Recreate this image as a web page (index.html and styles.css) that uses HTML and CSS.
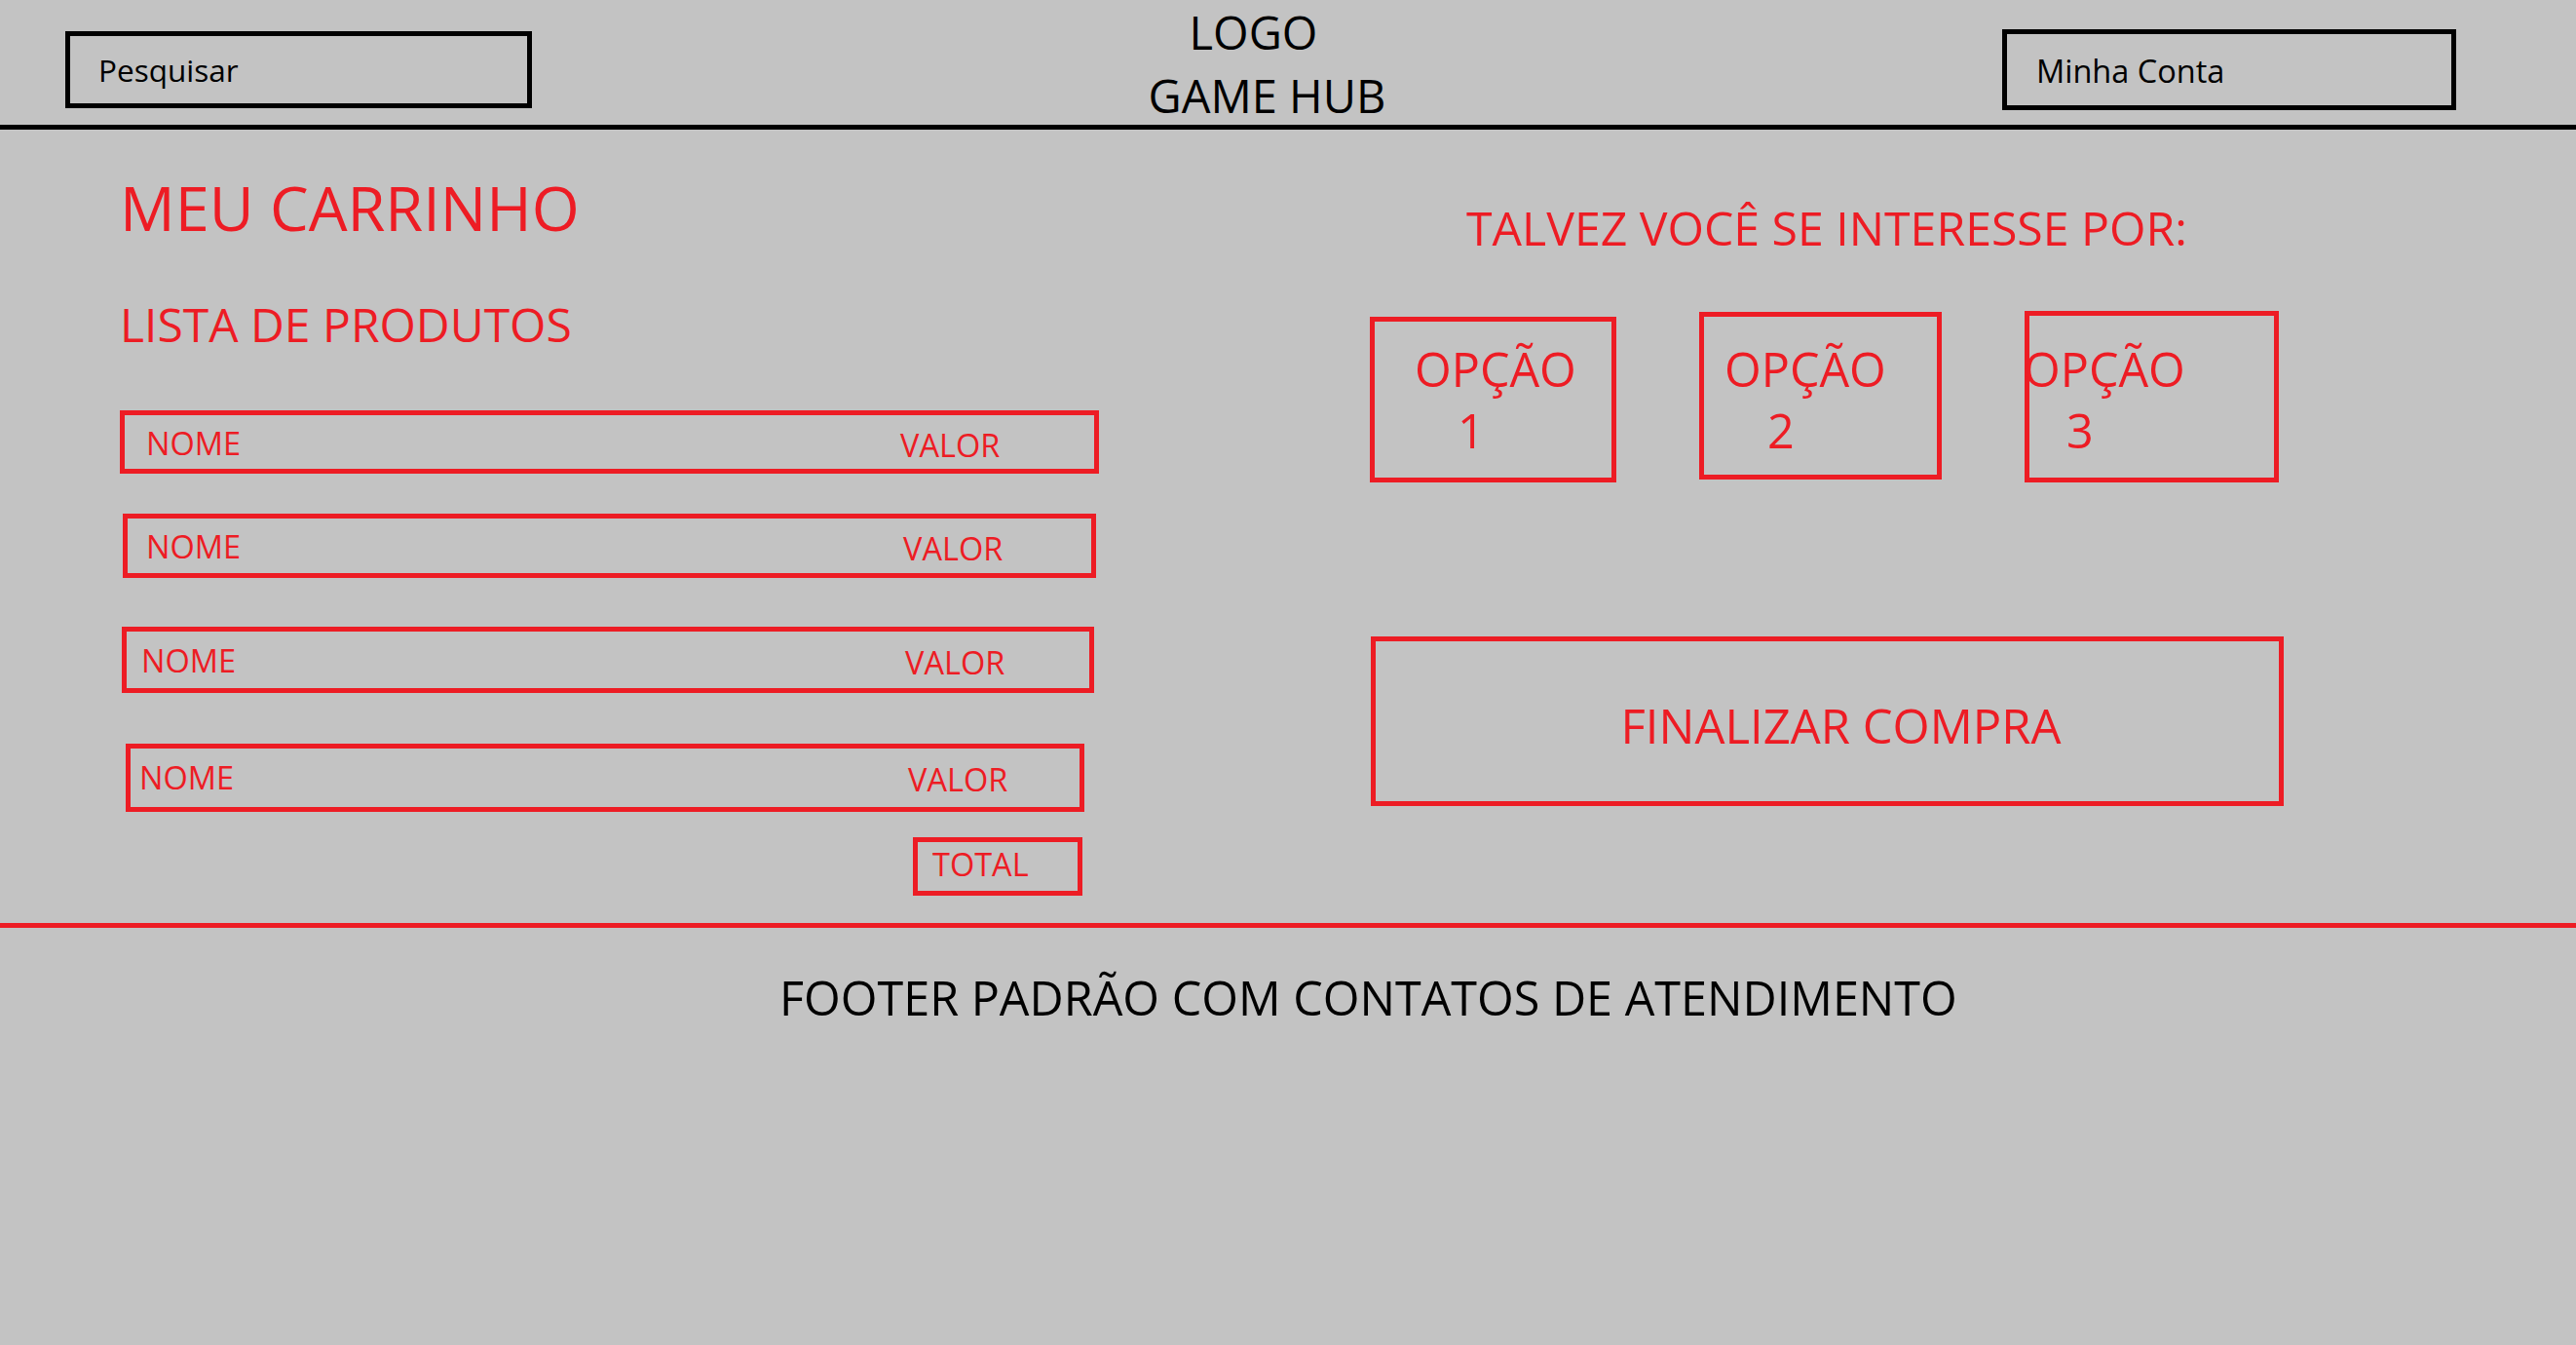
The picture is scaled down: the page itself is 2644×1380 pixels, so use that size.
FILE: index.html
```html
<!DOCTYPE html>
<html lang="pt-BR">
<head>
<meta charset="utf-8">
<title>Meu Carrinho - Game Hub</title>
<link rel="stylesheet" href="styles.css">
</head>
<body>
<header class="topbar">
  <div class="search-box">Pesquisar</div>
  <div class="logo">
    <div class="logo-line logo-top">LOGO</div>
    <div class="logo-line">GAME HUB</div>
  </div>
  <div class="account-box">Minha Conta</div>
</header>
<main class="content">
  <section class="cart">
    <h1 class="cart-title">MEU CARRINHO</h1>
    <h2 class="cart-subtitle">LISTA DE PRODUTOS</h2>
    <div class="cart-list">
      <div class="cart-row"><span class="item-name">NOME</span><span class="item-value">VALOR</span></div>
      <div class="cart-row"><span class="item-name">NOME</span><span class="item-value">VALOR</span></div>
      <div class="cart-row"><span class="item-name">NOME</span><span class="item-value">VALOR</span></div>
      <div class="cart-row"><span class="item-name">NOME</span><span class="item-value">VALOR</span></div>
      <div class="cart-total">TOTAL</div>
    </div>
  </section>
  <section class="suggest">
    <h2 class="suggest-title">TALVEZ VOCÊ SE INTERESSE POR:</h2>
    <div class="options">
      <div class="option"><div class="opt-text"><div class="opt-label">OPÇÃO</div><div class="opt-num">1</div></div></div>
      <div class="option"><div class="opt-text"><div class="opt-label">OPÇÃO</div><div class="opt-num">2</div></div></div>
      <div class="option"><div class="opt-text"><div class="opt-label">OPÇÃO</div><div class="opt-num">3</div></div></div>
    </div>
    <div class="checkout">FINALIZAR COMPRA</div>
  </section>
</main>
<footer class="footer">
  <p class="footer-text">FOOTER PADRÃO COM CONTATOS DE ATENDIMENTO</p>
</footer>
</body>
</html>
```
FILE: styles.css
```css
html {
  background: #c3c3c3;
}
body {
  margin: 0;
  min-height: 1380px;
  background: #c3c3c3;
  font-family: "Open Sans", "Noto Sans", sans-serif;
  color: #000;
}
* {
  box-sizing: border-box;
}
h1, h2, p {
  margin: 0;
  font-weight: normal;
}

/* Header */
.topbar {
  height: 133px;
  border-bottom: 5px solid #000;
  display: flex;
  justify-content: space-between;
  align-items: flex-start;
  padding: 0 123px 0 67px;
}
.search-box {
  margin-top: 32px;
  width: 479px;
  height: 79px;
  border: 5px solid #000;
  display: flex;
  align-items: center;
  padding-left: 29px;
  font-size: 31.5px;
  line-height: 1;
}
.account-box {
  margin-top: 30px;
  width: 466px;
  height: 83px;
  border: 5px solid #000;
  display: flex;
  align-items: center;
  padding-left: 30px;
  padding-top: 3px;
  font-size: 32.5px;
  line-height: 1;
}
.logo {
  text-align: center;
  font-size: 47px;
  line-height: 65px;
  padding-top: 1px;
}
.logo-top {
  padding-right: 28px;
}

/* Main */
.content {
  height: 814px;
  display: grid;
  grid-template-columns: 1406px 1fr;
}
.cart {
  padding-left: 123px;
  color: #ed1c24;
}
.cart-title {
  margin-top: 48px;
  font-size: 63px;
  line-height: 1;
}
.cart-subtitle {
  margin-top: 65px;
  font-size: 48px;
  line-height: 1;
}
.cart-list {
  display: flex;
  flex-direction: column;
  align-items: flex-start;
}
.cart-row {
  border: 5px solid #ed1c24;
  display: flex;
  align-items: center;
  padding-top: 3px;
  font-size: 32.5px;
  line-height: 1;
}
.item-name {
  width: 796px;
}
.item-value {
  margin-top: 4px;
}
.cart-row:nth-child(1) {
  margin-top: 64px;
  width: 1005px;
  height: 65px;
}
.cart-row:nth-child(1) .item-name { padding-left: 22px; }
.cart-row:nth-child(2) {
  margin-top: 41px;
  margin-left: 3px;
  width: 999px;
  height: 66px;
}
.cart-row:nth-child(2) .item-name { padding-left: 19px; }
.cart-row:nth-child(3) {
  margin-top: 50px;
  margin-left: 2px;
  width: 998px;
  height: 68px;
}
.cart-row:nth-child(3) .item-name { padding-left: 15px; width: 799px; }
.cart-row:nth-child(4) {
  margin-top: 52px;
  margin-left: 6px;
  width: 984px;
  height: 70px;
  padding-top: 1px;
}
.cart-row:nth-child(4) .item-name { padding-left: 9px; width: 798px; }
.cart-total {
  margin-top: 26px;
  margin-left: 814px;
  width: 174px;
  height: 60px;
  border: 5px solid #ed1c24;
  display: flex;
  align-items: center;
  padding-left: 15px;
  padding-bottom: 3px;
  font-size: 32.5px;
  line-height: 1;
}

.suggest {
  color: #ed1c24;
}
.suggest-title {
  margin-top: 76px;
  padding-left: 99px;
  font-size: 48.2px;
  line-height: 1;
}
.options {
  margin-top: 62px;
  display: flex;
  align-items: flex-start;
  gap: 85px;
}
.option {
  border: 5px solid #ed1c24;
  font-size: 48.5px;
  line-height: 63px;
}
.option:nth-child(1) {
  margin-top: 6px;
  width: 253px;
  height: 170px;
  padding: 17px 0 0 41px;
}
.option:nth-child(2) {
  margin-top: 1px;
  width: 249px;
  height: 172px;
  padding: 22px 0 0 21px;
}
.option:nth-child(3) {
  width: 261px;
  height: 176px;
  padding: 23px 0 0 0;
}
.option:nth-child(3) .opt-text {
  margin-left: -6px;
}
.opt-num {
  padding-left: 44px;
}
.checkout {
  margin-top: 158px;
  margin-left: 1px;
  width: 937px;
  height: 174px;
  border: 5px solid #ed1c24;
  display: flex;
  align-items: center;
  justify-content: center;
  padding-left: 28px;
  padding-top: 8px;
  font-size: 49px;
  line-height: 1;
}

/* Footer */
.footer {
  border-top: 5px solid #ed1c24;
  padding: 47px 0 0 800px;
}
.footer-text {
  font-size: 48.5px;
  line-height: 1;
  white-space: nowrap;
}
```
